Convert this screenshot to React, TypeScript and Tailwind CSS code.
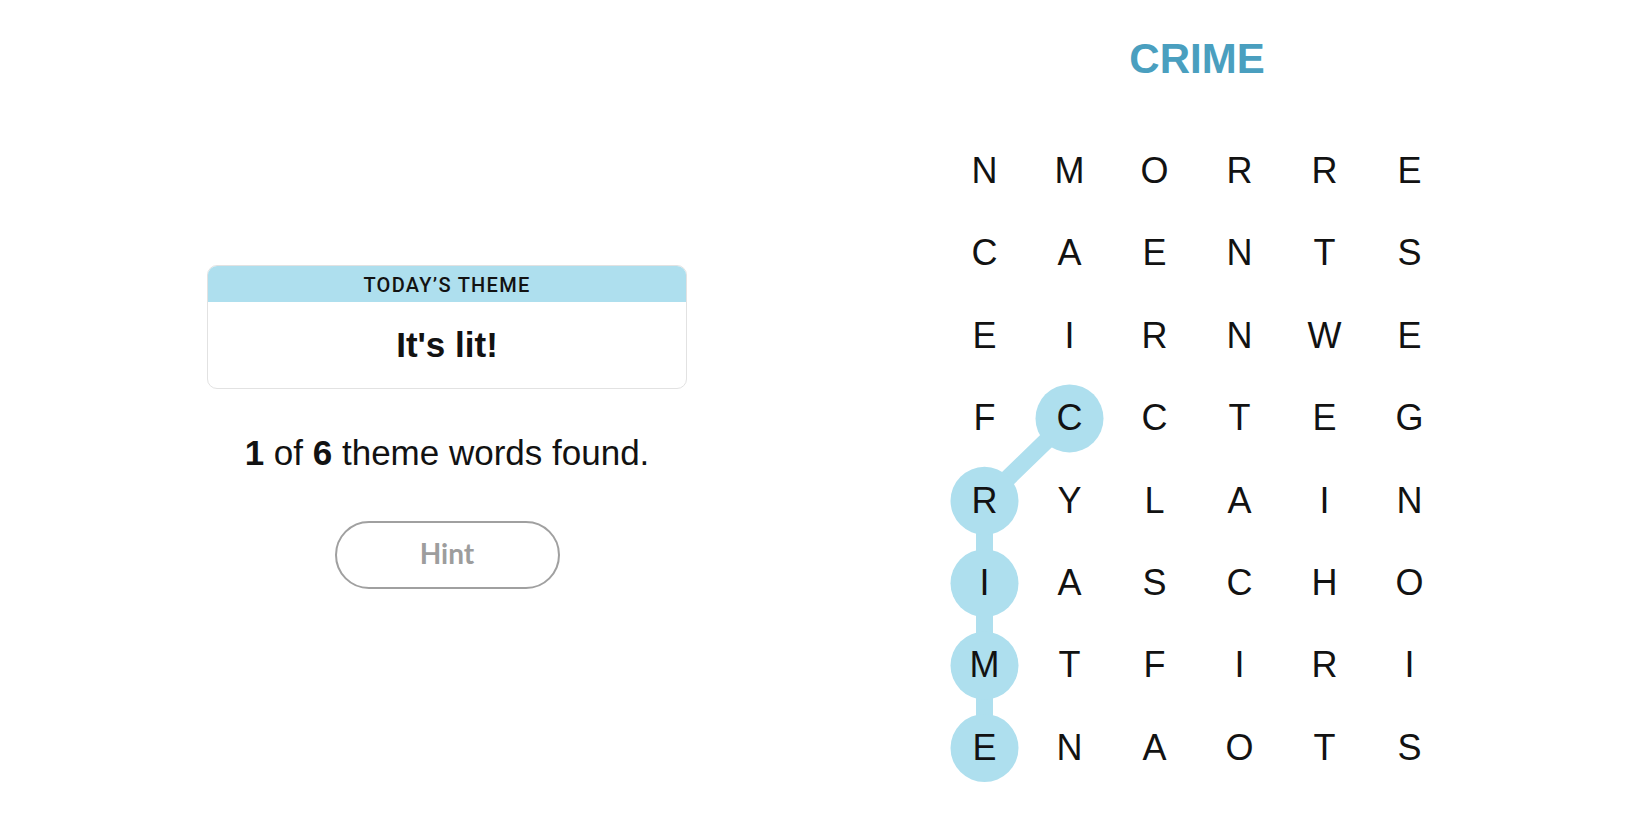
import React from "react";

const GRID = [
  ["N", "M", "O", "R", "R", "E"],
  ["C", "A", "E", "N", "T", "S"],
  ["E", "I", "R", "N", "W", "E"],
  ["F", "C", "C", "T", "E", "G"],
  ["R", "Y", "L", "A", "I", "N"],
  ["I", "A", "S", "C", "H", "O"],
  ["M", "T", "F", "I", "R", "I"],
  ["E", "N", "A", "O", "T", "S"],
];

const CW = 85;
const CH = 82.4;
const PATH: [number, number][] = [
  [1, 3],
  [0, 4],
  [0, 5],
  [0, 6],
  [0, 7],
];

const cx = (c: number) => CW / 2 + CW * c;
const cy = (r: number) => CH / 2 + CH * r;

function Board() {
  const pts = PATH.map(([c, r]) => `${cx(c)},${cy(r)}`).join(" ");
  return (
    <div className="relative w-[510px] h-[659.2px]">
      <svg
        className="absolute left-0 top-0 z-0"
        width={510}
        height={660}
        viewBox="0 0 510 660"
      >
        <polyline
          points={pts}
          fill="none"
          stroke="#aedfee"
          strokeWidth={17}
          strokeLinejoin="round"
          strokeLinecap="round"
        />
        {PATH.map(([c, r]) => (
          <circle key={`${c}-${r}`} cx={cx(c)} cy={cy(r)} r={34} fill="#aedfee" />
        ))}
      </svg>
      <div className="relative z-10 grid grid-cols-[repeat(6,85px)] grid-rows-[repeat(8,82.4px)]">
        {GRID.flat().map((l, i) => (
          <div
            key={i}
            className="flex items-center justify-center text-[36px] leading-[82.4px] text-[#121212] font-['Liberation_Sans',Arial,sans-serif]"
          >
            {l}
          </div>
        ))}
      </div>
    </div>
  );
}

export default function App() {
  return (
    <div className="w-[1650px] h-[825px] bg-white flex pl-[72px] font-['Liberation_Sans',Arial,sans-serif] text-[#121212] overflow-hidden">
      <div className="w-[750px] flex flex-col items-center pt-[265px]">
        <div className="w-[480px] rounded-[10px] border border-[#e2e2e2] overflow-hidden">
          <div className="h-[36px] bg-[#aedfee] flex items-center justify-center pt-[2px]">
            <span className="text-[20px] leading-[36px] font-medium tracking-[1.3px] uppercase font-['Roboto','Liberation_Sans',sans-serif] text-[#121212]">
              Today’s Theme
            </span>
          </div>
          <div className="h-[86px] flex items-center justify-center">
            <span className="text-[35px] font-bold leading-[40px]">It's lit!</span>
          </div>
        </div>
        <div className="mt-[44px] text-[35px] leading-[40px]">
          <b>1</b> of <b>6</b> theme words found.
        </div>
        <button className="mt-[48px] w-[225px] h-[68px] rounded-full border-2 border-[#a0a0a0] flex items-center justify-center pb-[4px] text-[28px] font-bold text-[#9d9d9d] font-['Lato','Liberation_Sans',sans-serif] bg-white">
          Hint
        </button>
      </div>
      <div className="w-[750px] flex flex-col items-center">
        <div className="mt-[34px] text-[42px] leading-[50px] font-bold text-[#4a9fbf]">CRIME</div>
        <div className="mt-[46px]">
          <Board />
        </div>
      </div>
    </div>
  );
}
